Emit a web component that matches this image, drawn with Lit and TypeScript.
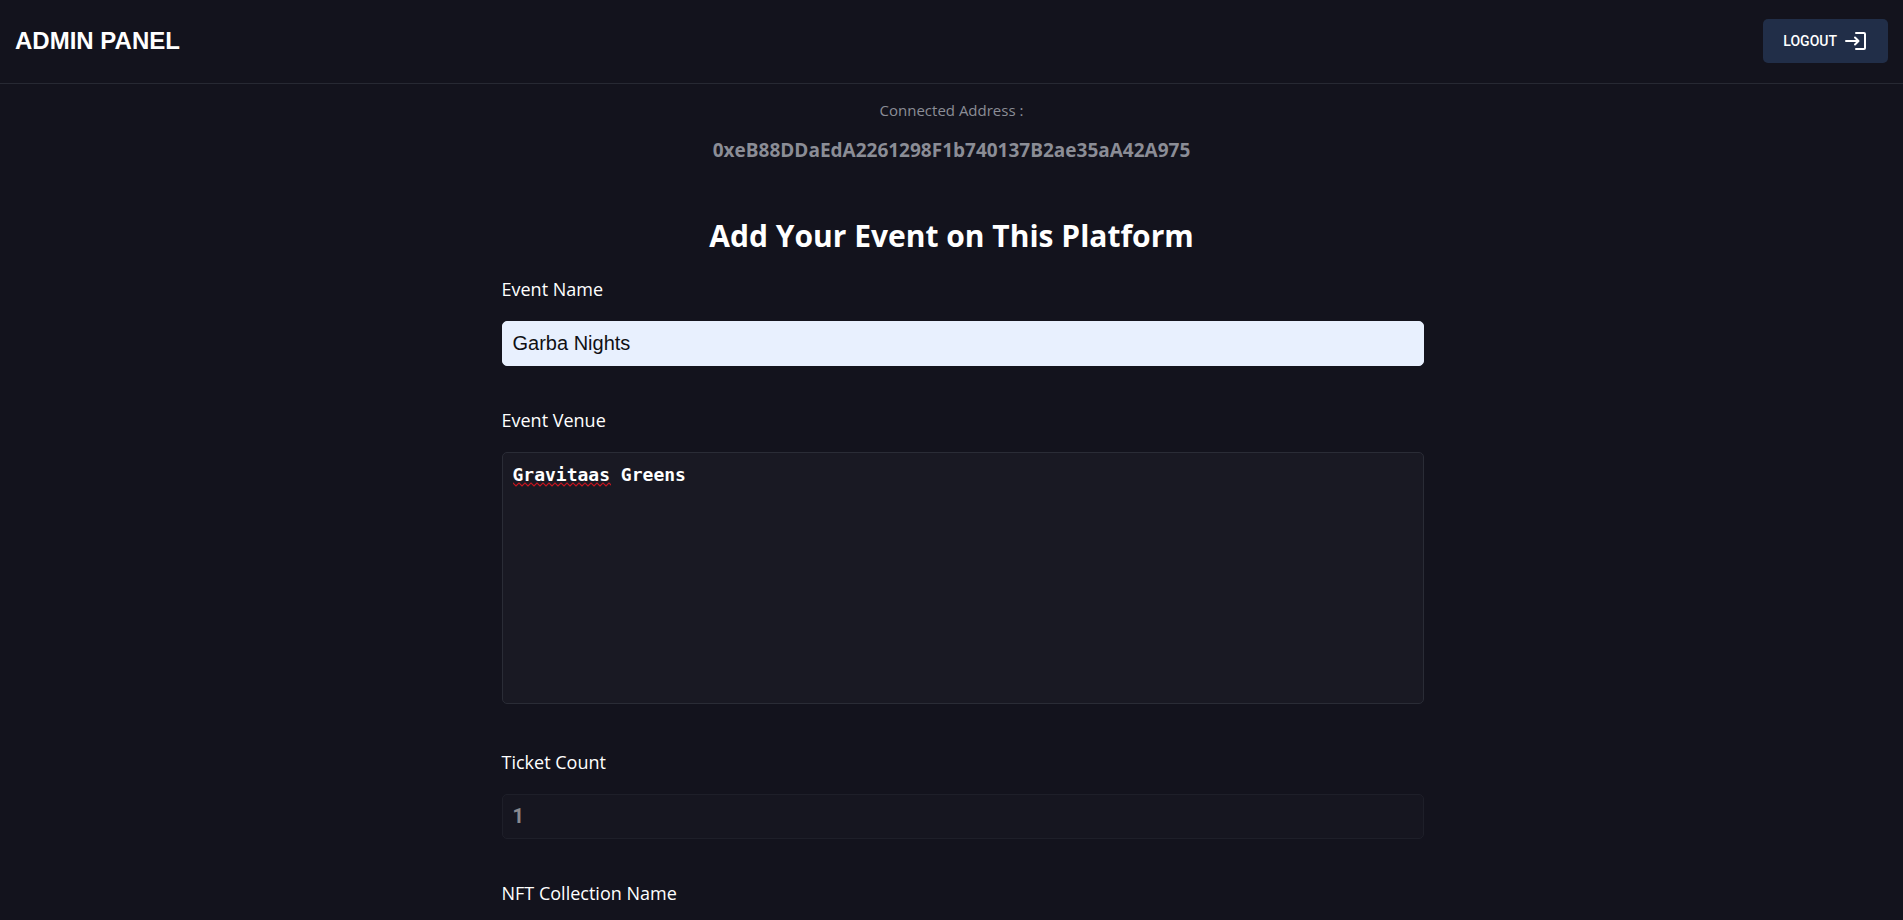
import { LitElement, html, css } from "lit";
import { customElement, state } from "lit/decorators.js";

@customElement("app-header")
export class AppHeader extends LitElement {
  static styles = css`
    :host {
      display: block;
    }
    .bar {
      display: flex;
      align-items: center;
      justify-content: space-between;
      padding: 19px 15px 20px;
      border-bottom: 1px solid #272933;
    }
    .title {
      margin: 0;
      font: bold 24px/28px "Liberation Sans", Arial, sans-serif;
      color: #fff;
    }
    .logout {
      display: flex;
      align-items: center;
      gap: 7px;
      height: 44px;
      padding: 0 20px;
      border: 0;
      border-radius: 5px;
      background: #212e48;
      color: #fff;
      font: 500 14px/20px Roboto, sans-serif;
      cursor: pointer;
    }
    .icon {
      display: block;
      width: 24px;
      height: 24px;
    }
  `;

  render() {
    return html`
      <header class="bar">
        <h2 class="title">ADMIN PANEL</h2>
        <button class="logout" type="button">
          LOGOUT
          <svg
            class="icon"
            viewBox="0 0 24 24"
            fill="none"
            stroke="currentColor"
            stroke-width="2"
            stroke-linecap="round"
            stroke-linejoin="round"
            aria-hidden="true"
          >
            <path d="M12 4H20a1 1 0 0 1 1 1v14a1 1 0 0 1-1 1h-8" />
            <path d="M2 12H14M11 8.500l3.500 3.500-3.500 3.500" />
          </svg>
        </button>
      </header>
    `;
  }
}

@customElement("app-root")
export class AppRoot extends LitElement {
  static styles = css`
    :host {
      display: block;
      box-sizing: border-box;
      height: 100vh;
      overflow: auto;
      scrollbar-width: none;
      background: #13131d;
      color: #fff;
      font-family: "Open Sans", "Noto Sans", sans-serif;
    }
    .account {
      display: flex;
      flex-direction: column;
      align-items: center;
      gap: 16px;
      padding-top: 14px;
      color: #8b8d96;
    }
    .caption {
      margin: 0;
      font-size: 15px;
      line-height: 24px;
    }
    .address {
      margin: 0;
      font-size: 19px;
      line-height: 24px;
      font-weight: 700;
    }
    .heading {
      margin: 50px 0 16px;
      text-align: center;
      font-size: 30px;
      line-height: 48px;
      font-weight: 700;
    }
    .form {
      display: flex;
      flex-direction: column;
      gap: 41px;
      max-width: 900px;
      margin: 0 auto;
      padding-bottom: 40px;
    }
    .field {
      display: flex;
      flex-direction: column;
      gap: 19px;
    }
    .label {
      font-size: 18px;
      line-height: 26px;
    }
    .control {
      position: relative;
      padding-bottom: 4px;
    }
    .input {
      display: block;
      box-sizing: content-box;
      width: 100%;
      height: 23px;
      padding: 10px;
      border: 1px solid #2a2c36;
      border-radius: 5px;
      outline: none;
      background: #191923;
      color: #fff;
      font: bold 20px/23px "Liberation Sans", Arial, sans-serif;
    }
    .filled {
      border-color: #e8f0fe;
      background: #e8f0fe;
      color: #101014;
      font-weight: 400;
    }
    .area {
      height: 230px;
      resize: none;
      font: bold 18px/23px "DejaVu Sans Mono", Consolas, monospace;
    }
    .count {
      font-family: Roboto, sans-serif;
    }
    .count:disabled {
      opacity: 0.5;
    }
    .squiggle {
      position: absolute;
      left: 11px;
      top: 30px;
      width: 98px;
      height: 5px;
      pointer-events: none;
    }
  `;

  @state() private address = "0xeB88DDaEdA2261298F1b740137B2ae35aA42A975";

  render() {
    return html`
      <app-header></app-header>
      <main>
        <section class="account">
          <p class="caption">Connected Address :</p>
          <p class="address">${this.address}</p>
        </section>
        <h1 class="heading">Add Your Event on This Platform</h1>
        <form class="form">
          <div class="field">
            <label class="label" for="name">Event Name</label>
            <input class="input filled" id="name" type="text" value="Garba Nights" />
          </div>
          <div class="field">
            <label class="label" for="venue">Event Venue</label>
            <div class="control">
              <textarea class="input area" id="venue" spellcheck="false" .value=${"Gravitaas Greens"}></textarea>
              <svg class="squiggle" aria-hidden="true">
                <defs>
                  <pattern id="wave" width="6" height="5" patternUnits="userSpaceOnUse">
                    <path d="M-1.500 2.500L0 1l3 3 3-3 1.500 1.500" fill="none" stroke="#c8141e" stroke-width="1.200" />
                  </pattern>
                </defs>
                <rect width="100%" height="5" fill="url(#wave)" />
              </svg>
            </div>
          </div>
          <div class="field">
            <label class="label" for="count">Ticket Count</label>
            <input class="input count" id="count" type="text" value="1" disabled />
          </div>
          <div class="field">
            <label class="label" for="collection">NFT Collection Name</label>
            <input class="input" id="collection" type="text" />
          </div>
        </form>
      </main>
    `;
  }
}
